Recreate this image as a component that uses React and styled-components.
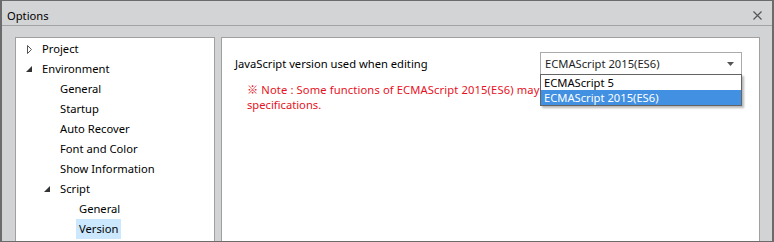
import React from "react";
import styled, { createGlobalStyle } from "styled-components";

const Global = createGlobalStyle`
  html, body { margin: 0; padding: 0; background: #fff; }
  body {
    font-family: "Noto Sans", "Open Sans", sans-serif;
    font-size: 11.2px;
    color: #000;
  }
  * { box-sizing: border-box; }
`;

const Window = styled.div`
  width: 774px;
  height: 242px;
  border-style: solid;
  border-color: #6b6b6b;
  border-width: 1px 2px 1px 2px;
  background: #d2d3d5;
  display: flex;
  flex-direction: column;
  overflow: hidden;
`;

const TitleBar = styled.div`
  height: 25px;
  flex: none;
  border-bottom: 1px solid #a3a3a3;
  display: flex;
  align-items: center;
  justify-content: space-between;
  padding: 5px 10px 0 5px;
  background: #d3d4d6;
`;

const Title = styled.span`
  color: #000;
`;

const CloseButton = styled.span`
  display: flex;
  width: 9px;
  height: 9px;
`;

const Body = styled.div`
  flex: 1;
  min-height: 0;
  display: flex;
  gap: 6px;
  padding: 11px 12px 0 13px;
`;

const TreePanel = styled.div`
  width: 200px;
  flex: none;
  background: #fff;
  border: 1px solid #a0a0a0;
  border-bottom: none;
  padding-top: 1px;
`;

const TreeRow = styled.div`
  height: 20px;
  display: flex;
  align-items: center;
  padding-left: ${(p) => p.$pad}px;
  white-space: nowrap;
`;

const ArrowSlot = styled.span`
  width: 16px;
  height: 20px;
  flex: none;
  display: flex;
  align-items: center;
  padding-left: ${(p) => p.$offset}px;
`;

const TreeLabel = styled.span`
  height: 20px;
  line-height: 20px;
  padding: 0 3px;
  background: ${(p) => (p.$selected ? "#cce8ff" : "transparent")};
  color: #000;
`;

const ContentPanel = styled.div`
  flex: 1;
  background: #fff;
  border: 1px solid #a0a0a0;
  border-bottom: none;
  padding: 14px 17px 0 13px;
`;

const SettingRow = styled.div`
  display: flex;
  align-items: center;
  justify-content: space-between;
`;

const SettingLabel = styled.span`
  color: #000;
`;

const ComboWrap = styled.div`
  position: relative;
  width: 202px;
`;

const Combo = styled.div`
  height: 23px;
  border: 1px solid #ababab;
  background: #fff;
  display: flex;
  align-items: center;
  justify-content: space-between;
  padding: 0 7px 0 4px;
  color: #1e1e1e;
`;

const DropList = styled.div`
  position: absolute;
  left: 0;
  top: 22px;
  width: 202px;
  background: #fff;
  border: 1px solid #646464;
  box-shadow: 2px 2px 2px rgba(0, 0, 0, 0.28);
  z-index: 2;
`;

const DropItem = styled.div`
  height: 15px;
  line-height: 15px;
  padding-left: 3px;
  white-space: nowrap;
  background: ${(p) => (p.$active ? "#4190e2" : "#fff")};
  color: ${(p) => (p.$active ? "#fff" : "#000")};
`;

const Note = styled.div`
  margin-top: 7px;
  padding-left: 12px;
  line-height: 15px;
  color: #e81123;
  white-space: nowrap;
`;

const NoteFirstLine = styled.span`
  letter-spacing: 0.12px;
`;

const Mark = styled.span`
  font-family: "Noto Sans CJK JP", "Noto Sans", sans-serif;
  margin-right: 3px;
`;

const Collapsed = () => (
  <svg width="6" height="9" viewBox="0 0 6 9">
    <path d="M0.5 0.5 L4.5 4.5 L0.5 8.5 Z" fill="none" stroke="#555" strokeWidth="1" />
  </svg>
);

const Expanded = () => (
  <svg width="6" height="6" viewBox="0 0 6 6">
    <path d="M6 0 L6 6 L0 6 Z" fill="#333" />
  </svg>
);

const pads = [7, 25, 44];

const tree = [
  { label: "Project", level: 0, arrow: "collapsed" },
  { label: "Environment", level: 0, arrow: "expanded" },
  { label: "General", level: 1 },
  { label: "Startup", level: 1 },
  { label: "Auto Recover", level: 1 },
  { label: "Font and Color", level: 1 },
  { label: "Show Information", level: 1 },
  { label: "Script", level: 1, arrow: "expanded" },
  { label: "General", level: 2 },
  { label: "Version", level: 2, selected: true },
];

export default function App() {
  return (
    <>
      <Global />
      <Window>
        <TitleBar>
          <Title>Options</Title>
          <CloseButton>
            <svg width="9" height="9" viewBox="0 0 9 9">
              <path d="M0.5 0.5 L8.5 8.5 M8.5 0.5 L0.5 8.5" stroke="#555" strokeWidth="1.2" />
            </svg>
          </CloseButton>
        </TitleBar>
        <Body>
          <TreePanel>
            {tree.map((n, i) => (
              <TreeRow key={i} $pad={pads[n.level]}>
                <ArrowSlot $offset={n.arrow === "collapsed" ? 4 : 3}>
                  {n.arrow === "collapsed" && <Collapsed />}
                  {n.arrow === "expanded" && <Expanded />}
                </ArrowSlot>
                <TreeLabel $selected={n.selected}>{n.label}</TreeLabel>
              </TreeRow>
            ))}
          </TreePanel>
          <ContentPanel>
            <SettingRow>
              <SettingLabel>JavaScript version used when editing</SettingLabel>
              <ComboWrap>
                <Combo>
                  <span>ECMAScript 2015(ES6)</span>
                  <svg width="7" height="4" viewBox="0 0 7 4">
                    <path d="M0 0 L7 0 L3.5 4 Z" fill="#555" />
                  </svg>
                </Combo>
                <DropList>
                  <DropItem>ECMAScript 5</DropItem>
                  <DropItem $active>ECMAScript 2015(ES6)</DropItem>
                </DropList>
              </ComboWrap>
            </SettingRow>
            <Note>
              <NoteFirstLine>
                <Mark>※</Mark>Note : Some functions of ECMAScript 2015(ES6) may not work due to browser
              </NoteFirstLine>
              <br />
              specifications.
            </Note>
          </ContentPanel>
        </Body>
      </Window>
    </>
  );
}
